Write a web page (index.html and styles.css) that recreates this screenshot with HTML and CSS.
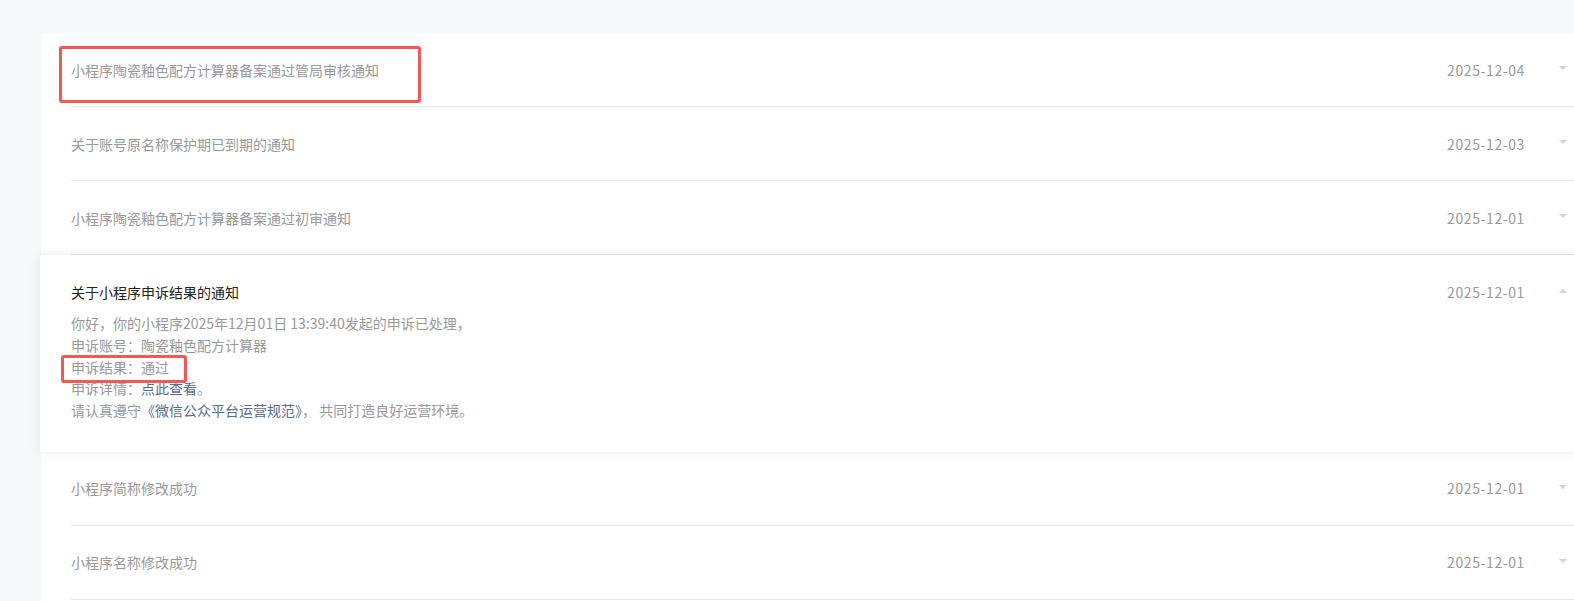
FILE: index.html
```html
<!DOCTYPE html>
<html lang="zh-CN">
<head>
<meta charset="utf-8">
<title>通知列表</title>
<link rel="stylesheet" href="styles.css">
</head>
<body>
<div class="page">
  <div class="panel">
    <div class="row">
      <div class="row-inner">
        <span class="title">小程序陶瓷釉色配方计算器备案通过管局审核通知</span>
        <span class="date">2025-12-04</span>
        <span class="caret caret-down"></span>
      </div>
      <span class="mark mark-title"></span>
    </div>
    <div class="row">
      <div class="row-inner">
        <span class="title">关于账号原名称保护期已到期的通知</span>
        <span class="date">2025-12-03</span>
        <span class="caret caret-down"></span>
      </div>
    </div>
    <div class="row">
      <div class="row-inner">
        <span class="title">小程序陶瓷釉色配方计算器备案通过初审通知</span>
        <span class="date">2025-12-01</span>
        <span class="caret caret-down"></span>
      </div>
    </div>
    <div class="card">
      <div class="card-head">
        <span class="card-title">关于小程序申诉结果的通知</span>
        <span class="date">2025-12-01</span>
        <span class="caret caret-up"></span>
      </div>
      <div class="card-body">
        <p class="line">你好，你的小程序2025年12月01日 13:39:40发起的申诉已处理，</p>
        <p class="line">申诉账号：陶瓷釉色配方计算器</p>
        <p class="line marked">申诉结果：通过<span class="mark mark-line"></span></p>
        <p class="line">申诉详情：<a class="link" href="#">点此查看</a>。</p>
        <p class="line">请认真遵守<a class="link" href="#">《微信公众平台运营规范》</a>， 共同打造良好运营环境。</p>
      </div>
    </div>
    <div class="row">
      <div class="row-inner">
        <span class="title">小程序简称修改成功</span>
        <span class="date">2025-12-01</span>
        <span class="caret caret-down"></span>
      </div>
    </div>
    <div class="row">
      <div class="row-inner">
        <span class="title">小程序名称修改成功</span>
        <span class="date">2025-12-01</span>
        <span class="caret caret-down"></span>
      </div>
    </div>
  </div>
</div>
</body>
</html>
```

FILE: styles.css
```css
html, body {
  margin: 0;
  padding: 0;
  background: #f7f8fa;
  overflow: hidden;
  font-family: "Noto Sans CJK SC", "Noto Sans", sans-serif;
  font-size: 14px;
}

.page {
  padding-top: 33px;
  padding-left: 41px;
  height: 568px;
}

.panel {
  background: #fff;
  border-top-left-radius: 4px;
  height: 100%;
}

.row {
  position: relative;
  padding-left: 30px;
}

.row-inner {
  display: flex;
  align-items: center;
  height: 73px;
  border-bottom: 1px solid #e6e6e6;
  padding-right: 7px;
}

.title {
  flex: 1;
  color: #999;
  line-height: 22px;
}

.date {
  color: #9a9a9a;
  line-height: 22px;
  letter-spacing: 0.6px;
  margin-right: 34px;
}

.caret {
  width: 0;
  height: 0;
  border-left: 4.5px solid transparent;
  border-right: 4.5px solid transparent;
}

.caret-down {
  border-top: 4px solid #d4d4d4;
  margin-top: -3px;
}

.caret-up {
  border-bottom: 4px solid #d4d4d4;
  margin-top: -3px;
}

.card {
  margin-left: -1px;
  background: #fff;
  box-shadow: 0 0 12px rgba(0, 0, 0, 0.08);
  padding: 26px 7px 30px 31px;
  position: relative;
  z-index: 1;
}

.card-head {
  display: flex;
  align-items: center;
  height: 22px;
  margin-bottom: 10px;
}

.card-title {
  flex: 1;
  color: #222;
  line-height: 22px;
}

.card-body .line {
  margin: 0;
  color: #999;
  line-height: 21.75px;
}

.marked {
  position: relative;
}

.link {
  color: #576b95;
  text-decoration: none;
}

.mark {
  position: absolute;
  border: 3px solid #f55656;
  border-radius: 3px;
  box-sizing: border-box;
  pointer-events: none;
}

.mark-title {
  left: 18px;
  top: 13px;
  width: 362px;
  height: 57px;
}

.mark-line {
  left: -10px;
  top: -2px;
  width: 126px;
  height: 28px;
}
```
